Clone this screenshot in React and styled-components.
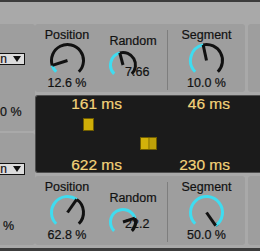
import styled, { createGlobalStyle } from "styled-components";

const GlobalStyle = createGlobalStyle`
  html, body {
    margin: 0;
    padding: 0;
    background: #a9a9a9;
  }
  body {
    font-family: "Liberation Sans", Arial, sans-serif;
    color: #111;
    -webkit-text-stroke: 0.2px currentColor;
  }
`;

const Frame = styled.div`
  width: 260px;
  height: 251px;
  overflow: hidden;
  display: flex;
  flex-direction: column;
  background: #a9a9a9;
`;

const Strip = styled.div`
  flex: none;
  height: ${(p) => p.$h}px;
  background: #3c3c3c;
`;

const Band = styled.div`
  flex: none;
  height: 22px;
`;

const Main = styled.div`
  flex: none;
  height: 221px;
  margin-bottom: 3px;
  display: grid;
  grid-template-columns: 35px 1fr;
`;

const LeftCol = styled.div`
  display: flex;
  flex-direction: column;
  gap: 2px;
`;

const LeftPanel = styled.div`
  height: ${(p) => p.$h}px;
  background: #9e9e9e;
  border-radius: 0 3px 3px 0;
  display: flex;
  flex-direction: column;
  padding-top: ${(p) => p.$top}px;
  box-sizing: border-box;
`;

const Dropdown = styled.div`
  margin-left: -6px;
  width: 31px;
  height: 12px;
  box-sizing: border-box;
  border: 1px solid #111;
  background: #dcdcdc;
  display: flex;
  justify-content: flex-end;
  align-items: center;
  gap: 6px;
  padding-right: 3px;
  font-size: 12px;
  line-height: 10px;
  white-space: nowrap;
`;

const Arrow = styled.span`
  flex: none;
  width: 0;
  height: 0;
  border-left: 4px solid transparent;
  border-right: 4px solid transparent;
  border-top: 6px solid #111;
`;

const SideValue = styled.div`
  margin-left: ${(p) => p.$left}px;
  margin-top: ${(p) => p.$gap}px;
  font-size: 12.5px;
  line-height: 14px;
  white-space: nowrap;
`;

const RightCol = styled.div`
  display: flex;
  flex-direction: column;
  gap: 3px;
`;

const Row = styled.div`
  height: ${(p) => p.$h}px;
  display: flex;
  gap: 3px;
`;

const KnobPanel = styled.div`
  width: 210px;
  background: #9e9e9e;
  border-radius: 3px;
  display: flex;
  align-items: flex-start;
`;

const NextPanel = styled.div`
  flex: 1;
  background: #9e9e9e;
  border-radius: 3px 0 0 3px;
`;

const Group = styled.div`
  width: ${(p) => p.$w}px;
  flex: none;
  display: flex;
  flex-direction: column;
  align-items: center;
  padding-top: ${(p) => p.$top}px;
`;

const Label = styled.div`
  font-size: 12.5px;
  line-height: 14px;
  white-space: nowrap;
`;

const Value = styled.div`
  font-size: 12.5px;
  line-height: 14px;
  margin-top: -3px;
  white-space: nowrap;
`;

const SmallKnobWrap = styled.div`
  position: relative;
  align-self: flex-start;
  margin-left: 9px;
  margin-top: 2px;
`;

const SmallValue = styled.span`
  position: absolute;
  left: 17px;
  top: ${(p) => p.$top}px;
  font-size: 12.5px;
  line-height: 14px;
`;

const Separator = styled.div`
  flex: none;
  width: 1px;
  height: 60px;
  margin-top: 6px;
  background: #7e7e7e;
`;

const Display = styled.div`
  position: relative;
  height: 78px;
  box-sizing: border-box;
  background: #1b1b1b;
  border: 1px solid #4e4e4e;
  border-right: none;
  border-radius: 3px 0 0 3px;
  display: flex;
  flex-direction: column;
  justify-content: space-between;
`;

const TimeRow = styled.div`
  display: grid;
  grid-template-columns: 86px 108px;
`;

const Time = styled.span`
  text-align: right;
  color: #f3d37a;
  font-size: 15.5px;
  line-height: 15px;
  white-space: nowrap;
`;

const Grain = styled.div`
  position: absolute;
  left: ${(p) => p.$x}px;
  top: ${(p) => p.$y}px;
  width: ${(p) => p.$w}px;
  height: 13px;
  box-sizing: border-box;
  border: 1px solid #6f5c00;
  background: ${(p) => p.$bg};
`;

const Knob = ({ r, angle, sw = 3 }) => {
  const s = Math.ceil(r * 2 + sw + 2);
  const c = s / 2;
  const pt = (a, rad) => [
    c + rad * Math.sin((a * Math.PI) / 180),
    c - rad * Math.cos((a * Math.PI) / 180),
  ];
  const arc = (a0, a1) => {
    const [x0, y0] = pt(a0, r);
    const [x1, y1] = pt(a1, r);
    return `M${x0} ${y0}A${r} ${r} 0 ${a1 - a0 > 180 ? 1 : 0} 1 ${x1} ${y1}`;
  };
  const [nx, ny] = pt(angle, r);
  return (
    <svg width={s} height={s} style={{ display: "block" }}>
      <path d={arc(angle, 135)} fill="none" stroke="#111" strokeWidth={sw} />
      <path d={arc(-135, angle)} fill="none" stroke="#3fdcf0" strokeWidth={sw} />
      <line x1={c} y1={c} x2={nx} y2={ny} stroke="#111" strokeWidth={sw} />
    </svg>
  );
};

const KnobRow = ({ h, rndTop, pos, rnd, seg }) => (
  <Row $h={h}>
    <KnobPanel>
      <Group $w={64} $top={4}>
        <Label>Position</Label>
        <Knob r={16} angle={pos.angle} />
        <Value>{pos.text}</Value>
      </Group>
      <Group $w={68} $top={rndTop}>
        <Label>Random</Label>
        <SmallKnobWrap>
          <Knob r={12.5} angle={rnd.angle} />
          <SmallValue $top={rnd.top}>{rnd.text}</SmallValue>
        </SmallKnobWrap>
      </Group>
      <Separator />
      <Group $w={77} $top={4}>
        <Label>Segment</Label>
        <Knob r={16} angle={seg.angle} />
        <Value>{seg.text}</Value>
      </Group>
    </KnobPanel>
    <NextPanel />
  </Row>
);

export default function App() {
  return (
    <>
      <GlobalStyle />
      <Frame>
        <Strip $h={2} />
        <Band />
        <Main>
          <LeftCol>
            <LeftPanel $h={107} $top={29}>
              <Dropdown>
                n<Arrow />
              </Dropdown>
              <SideValue $left={0} $gap={40}>0 %</SideValue>
            </LeftPanel>
            <LeftPanel $h={112} $top={30}>
              <Dropdown>
                n<Arrow />
              </Dropdown>
              <SideValue $left={3} $gap={44}>%</SideValue>
            </LeftPanel>
          </LeftCol>
          <RightCol>
            <KnobRow
              h={68}
              rndTop={10}
              pos={{ angle: -108, text: "12.6 %" }}
              rnd={{ angle: -15, text: "7.66", top: 15 }}
              seg={{ angle: -12, text: "10.0 %" }}
            />
            <Display>
              <TimeRow>
                <Time>161 ms</Time>
                <Time>46 ms</Time>
              </TimeRow>
              <Grain $x={47} $y={22} $w={11} $bg="#cfae08" />
              <Grain
                $x={104}
                $y={41}
                $w={17}
                $bg="linear-gradient(90deg, #d2b10a 0 45%, #a68c05 45% 62%, #bfa108 62%)"
              />
              <TimeRow>
                <Time>622 ms</Time>
                <Time>230 ms</Time>
              </TimeRow>
            </Display>
            <KnobRow
              h={69}
              rndTop={15}
              pos={{ angle: 35, text: "62.8 %" }}
              rnd={{ angle: 72, text: "22.2", top: 10 }}
              seg={{ angle: 145, text: "50.0 %" }}
            />
          </RightCol>
        </Main>
        <Strip $h={3} />
      </Frame>
    </>
  );
}
